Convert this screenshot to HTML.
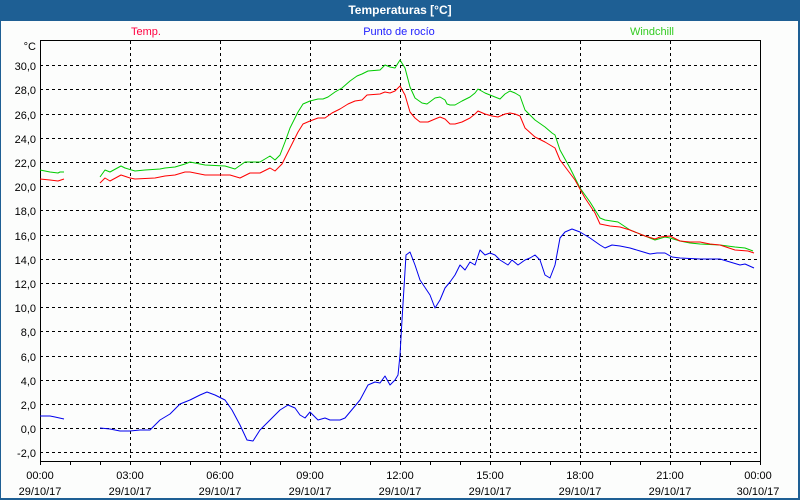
<!DOCTYPE html>
<html><head><meta charset="utf-8"><style>
html,body{margin:0;padding:0;width:800px;height:500px;overflow:hidden;background:#fcfdfc}
svg{display:block}
text{font-family:"Liberation Sans","DejaVu Sans",sans-serif;font-size:11px}
</style></head><body>
<svg width="800" height="500" viewBox="0 0 800 500" xmlns="http://www.w3.org/2000/svg">
<rect x="0" y="0" width="800" height="500" fill="#1e5f94"/>
<rect x="1" y="21" width="797" height="477" fill="#fcfdfc"/>
<text x="400" y="14" text-anchor="middle" fill="#fff" font-weight="bold" style="font-size:12px">Temperaturas [°C]</text>
<text x="146" y="35" text-anchor="middle" fill="#ff0040">Temp.</text>
<text x="399" y="35" text-anchor="middle" fill="#2020ff">Punto de rocío</text>
<text x="652" y="35" text-anchor="middle" fill="#33cc22">Windchill</text>
<g stroke="#000" stroke-width="1" stroke-dasharray="3,3" fill="none">
<path d="M40 65.5H760M40 89.5H760M40 114.5H760M40 138.5H760M40 162.5H760M40 186.5H760M40 210.5H760M40 235.5H760M40 259.5H760M40 283.5H760M40 307.5H760M40 331.5H760M40 356.5H760M40 380.5H760M40 404.5H760M40 428.5H760M40 452.5H760"/>
<path d="M130.5 41V461M220.5 41V461M310.5 41V461M400.5 41V461M490.5 41V461M580.5 41V461M670.5 41V461"/>
</g>
<rect x="40.5" y="40.5" width="720" height="421" fill="none" stroke="#000"/>
<path stroke="#000" d="M40.5 461v4M70.5 461v4M100.5 461v4M130.5 461v4M160.5 461v4M190.5 461v4M220.5 461v4M250.5 461v4M280.5 461v4M310.5 461v4M340.5 461v4M370.5 461v4M400.5 461v4M430.5 461v4M460.5 461v4M490.5 461v4M520.5 461v4M550.5 461v4M580.5 461v4M610.5 461v4M640.5 461v4M670.5 461v4M700.5 461v4M730.5 461v4M760.5 461v4"/>
<g fill="#000" text-anchor="end">
<text x="36" y="50">°C</text>
<text x="36" y="70">30,0</text><text x="36" y="94">28,0</text><text x="36" y="119">26,0</text><text x="36" y="143">24,0</text><text x="36" y="167">22,0</text><text x="36" y="191">20,0</text><text x="36" y="215">18,0</text><text x="36" y="240">16,0</text><text x="36" y="264">14,0</text><text x="36" y="288">12,0</text><text x="36" y="312">10,0</text><text x="36" y="336">8,0</text><text x="36" y="361">6,0</text><text x="36" y="385">4,0</text><text x="36" y="409">2,0</text><text x="36" y="433">0,0</text><text x="36" y="457">-2,0</text>
</g>
<g fill="#000" text-anchor="middle">
<text x="40" y="479">00:00</text><text x="40" y="495">29/10/17</text>
<text x="130" y="479">03:00</text><text x="130" y="495">29/10/17</text>
<text x="220" y="479">06:00</text><text x="220" y="495">29/10/17</text>
<text x="310" y="479">09:00</text><text x="310" y="495">29/10/17</text>
<text x="400" y="479">12:00</text><text x="400" y="495">29/10/17</text>
<text x="490" y="479">15:00</text><text x="490" y="495">29/10/17</text>
<text x="580" y="479">18:00</text><text x="580" y="495">29/10/17</text>
<text x="670" y="479">21:00</text><text x="670" y="495">29/10/17</text>
<text x="758" y="479">00:00</text><text x="758" y="495">30/10/17</text>
</g>
<g fill="none" stroke-width="1" stroke-linejoin="round">
<polyline stroke="#00cc00" points="40,170 50,172 58,173 60,172 64,172"/>
<polyline stroke="#00cc00" points="100,177 105,170 110,172 121,166 125,168 135,171 145,170 160,169 165,168 175,167 185,164 190,162 200,164 205,165 225,166 235,169 245,162 260,162 270,156 275,160 280,155 285,142 290,128 298,112 303,104 310,101 318,99 323,99 328,97 335,92 342,88 350,81 357,76 362,74 368,71 380,70 385,65 390,67 395,68 400,60 405,68 410,87 415,98 422,103 427,104 435,98 440,97 445,100 447,104 450,105 455,105 462,101 470,97 475,93 478,89 485,93 495,97 500,99 505,94 510,91 515,93 520,96 525,110 535,120 545,127 552,133 555,135 560,150 570,168 580,188 590,202 600,218 605,220 618,222 630,230 645,236 655,240 665,237 670,238 680,241 690,243 700,244 720,245 735,247 745,248 753,251"/>
<polyline stroke="#ff0000" points="40,179 50,180 58,181 64,179"/>
<polyline stroke="#ff0000" points="100,183 105,178 110,181 121,175 130,178 135,179 155,178 165,176 175,175 185,172 190,172 195,173 205,175 230,175 240,178 250,173 260,173 270,168 275,171 282,164 290,148 298,132 303,124 310,121 318,118 325,118 332,113 340,109 348,104 355,101 362,100 367,95 380,94 385,92 390,93 395,91 400,86 405,95 410,112 415,118 420,122 428,122 435,119 440,117 445,119 450,124 455,124 462,122 470,118 475,114 478,111 485,114 492,116 498,117 505,114 510,113 515,114 520,116 525,128 535,137 545,142 555,148 560,160 575,180 585,198 595,213 600,224 610,226 620,227 630,230 645,236 655,239 660,237 670,236 680,241 690,242 700,242 710,244 720,245 735,250 748,251 754,253"/>
<polyline stroke="#0000ee" points="40,416 50,416 55,417 64,419"/>
<polyline stroke="#0000ee" points="100,428 110,429 120,431 130,431 140,430 150,430 160,420 170,414 180,404 190,400 200,395 207,392 215,395 225,400 232,410 240,425 247,440 253,441 260,430 270,420 280,410 288,405 295,408 300,415 305,418 310,412 318,420 325,418 330,420 340,420 345,418 350,412 360,400 368,385 375,382 380,383 385,376 390,385 395,380 398,375 400,355 402,320 406,255 410,252 415,265 420,280 430,295 435,308 440,300 445,288 450,282 455,275 460,265 465,270 470,262 475,265 480,250 485,255 490,253 495,255 500,260 508,265 512,260 518,265 525,260 530,258 535,255 540,260 545,275 550,278 555,265 560,238 565,232 572,229 580,232 590,238 600,245 605,248 612,245 620,246 630,248 640,251 650,254 657,253 665,253 672,257 680,258 700,259 720,259 730,262 740,265 745,264 754,268"/>
</g>
</svg>
</body></html>
